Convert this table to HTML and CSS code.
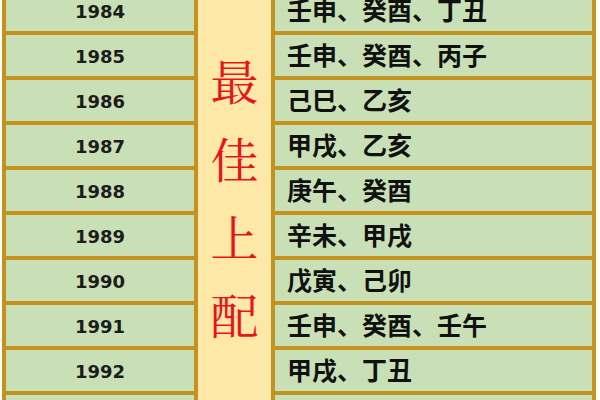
FILE: index.html
```html
<!DOCTYPE html>
<html lang="zh-CN">
<head>
<meta charset="utf-8">
<title>最佳上配</title>
<link rel="stylesheet" href="styles.css">
</head>
<body>
<div class="page">
  <div class="table">
    <div class="pair">
      <div class="mark">最<br>佳<br>上<br>配</div>
    </div>
    <div class="year r1">1984</div><div class="gz r1">壬申、癸酉、丁丑</div>
    <div class="year r2">1985</div><div class="gz r2">壬申、癸酉、丙子</div>
    <div class="year r3">1986</div><div class="gz r3">己巳、乙亥</div>
    <div class="year r4">1987</div><div class="gz r4">甲戌、乙亥</div>
    <div class="year r5">1988</div><div class="gz r5">庚午、癸酉</div>
    <div class="year r6">1989</div><div class="gz r6">辛未、甲戌</div>
    <div class="year r7">1990</div><div class="gz r7">戊寅、己卯</div>
    <div class="year r8">1991</div><div class="gz r8">壬申、癸酉、壬午</div>
    <div class="year r9">1992</div><div class="gz r9">甲戌、丁丑</div>
    <div class="year r10">1993</div><div class="gz r10">壬申、甲戌、丙子</div>
  </div>
</div>
</body>
</html>
```
FILE: styles.css
```css
html, body {
  margin: 0;
  padding: 0;
  background: #ffffff;
}
.page {
  width: 600px;
  height: 400px;
  overflow: hidden;
  background: #ffffff;
}
.table {
  margin: -14px 0 0 2px;
  width: 586px;
  padding: 4px;
  background: #c4921e;
  display: grid;
  grid-template-columns: 188px 73px 317px;
  grid-template-rows: repeat(10, 41px);
  column-gap: 4px;
  row-gap: 4px;
}
.year {
  grid-column: 1;
  background: #c9e0b6;
  display: flex;
  align-items: center;
  justify-content: center;
  font-family: "DejaVu Sans", Verdana, sans-serif;
  font-weight: bold;
  font-size: 18px;
  color: #1c1c1c;
  padding-top: 1px;
  box-sizing: border-box;
}
.gz {
  grid-column: 3;
  background: #c9e0b6;
  display: flex;
  align-items: center;
  padding-left: 12px;
  font-family: "Noto Sans CJK SC", sans-serif;
  font-weight: bold;
  font-size: 25px;
  color: #111111;
  box-sizing: border-box;
  padding-bottom: 4px;
}
.r1 { grid-row: 1; }
.r2 { grid-row: 2; }
.r3 { grid-row: 3; }
.r4 { grid-row: 4; }
.r5 { grid-row: 5; }
.r6 { grid-row: 6; }
.r7 { grid-row: 7; }
.r8 { grid-row: 8; }
.r9 { grid-row: 9; }
.r10 { grid-row: 10; }
.pair {
  grid-column: 2;
  grid-row: 1 / span 10;
  background: #fee8a8;
  display: flex;
  justify-content: center;
  padding-top: 51px;
  box-sizing: border-box;
}
.mark {
  font-family: "Noto Serif CJK SC", "Noto Sans CJK SC", serif;
  font-size: 48px;
  line-height: 78px;
  color: #e8141c;
  text-align: center;
}
```
